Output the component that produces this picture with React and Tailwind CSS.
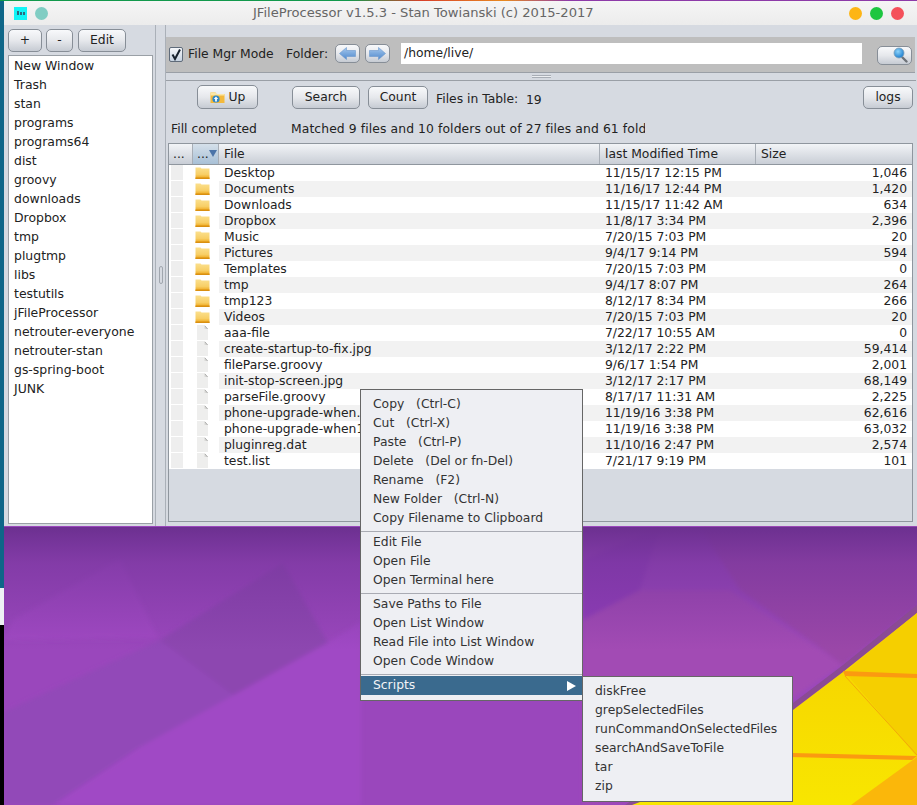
import React from "react";

const places = ["New Window","Trash","stan","programs","programs64","dist","groovy","downloads","Dropbox","tmp","plugtmp","libs","testutils","jFileProcessor","netrouter-everyone","netrouter-stan","gs-spring-boot","JUNK"];
const files = [
  ["d","Desktop","11/15/17 12:15 PM","1,046"],["d","Documents","11/16/17 12:44 PM","1,420"],["d","Downloads","11/15/17 11:42 AM","634"],["d","Dropbox","11/8/17 3:34 PM","2,396"],["d","Music","7/20/15 7:03 PM","20"],["d","Pictures","9/4/17 9:14 PM","594"],["d","Templates","7/20/15 7:03 PM","0"],["d","tmp","9/4/17 8:07 PM","264"],["d","tmp123","8/12/17 8:34 PM","266"],["d","Videos","7/20/15 7:03 PM","20"],
  ["f","aaa-file","7/22/17 10:55 AM","0"],["f","create-startup-to-fix.jpg","3/12/17 2:22 PM","59,414"],["f","fileParse.groovy","9/6/17 1:54 PM","2,001"],["f","init-stop-screen.jpg","3/12/17 2:17 PM","68,149"],["f","parseFile.groovy","8/17/17 11:31 AM","2,225"],["f","phone-upgrade-when.","11/19/16 3:38 PM","62,616"],["f","phone-upgrade-when1","11/19/16 3:38 PM","63,032"],["f","pluginreg.dat","11/10/16 2:47 PM","2,574"],["f","test.list","7/21/17 9:19 PM","101"],
];
const menuGroups = [
  ["Copy\u00a0\u00a0\u00a0(Ctrl-C)","Cut\u00a0\u00a0\u00a0(Ctrl-X)","Paste\u00a0\u00a0\u00a0(Ctrl-P)","Delete\u00a0\u00a0\u00a0(Del or fn-Del)","Rename\u00a0\u00a0\u00a0(F2)","New Folder\u00a0\u00a0\u00a0(Ctrl-N)","Copy Filename to Clipboard"],
  ["Edit File","Open File","Open Terminal here"],
  ["Save Paths to File","Open List Window","Read File into List Window","Open Code Window"],
];
const scripts = ["diskFree","grepSelectedFiles","runCommandOnSelectedFiles","searchAndSaveToFile","tar","zip"];

const btn = "flex items-center justify-center border border-[#878e97] rounded-[5px] bg-linear-to-b from-[#f8f9fb] via-[#e6e8ec] to-[#c6cbd3] text-[12.35px] text-[#222]";

function Wallpaper() {
  return (
    <svg className="absolute inset-0" width="917" height="805" viewBox="0 0 917 805">
      <defs>
        <linearGradient id="shade" x1="0" y1="527" x2="0" y2="650" gradientUnits="userSpaceOnUse">
          <stop offset="0" stopColor="#6c3090" stopOpacity="1" />
          <stop offset="0.3" stopColor="#74349a" stopOpacity="0.6" />
          <stop offset="1" stopColor="#74349a" stopOpacity="0" />
        </linearGradient>
        <linearGradient id="edge" x1="0" y1="0" x2="1" y2="0">
          <stop offset="0" stopColor="#12994c" />
          <stop offset="0.38" stopColor="#12994c" />
          <stop offset="0.46" stopColor="#d8402a" />
          <stop offset="0.55" stopColor="#e88a20" />
          <stop offset="0.62" stopColor="#8d3aa8" />
          <stop offset="1" stopColor="#8d3aa8" />
        </linearGradient>
        <linearGradient id="yl" x1="0" y1="613" x2="0" y2="805" gradientUnits="userSpaceOnUse">
          <stop offset="0" stopColor="#f6d000" />
          <stop offset="1" stopColor="#f8e600" />
        </linearGradient>
        <filter id="soft" x="-5%" y="-5%" width="110%" height="110%">
          <feGaussianBlur stdDeviation="2" />
        </filter>
      </defs>
      <rect width="917" height="805" fill="#9a47bc" />
      <g filter="url(#soft)">
        <polygon points="4,712 160,640 328,643 240,700 140,747 53,805 4,805" fill="#9248b8" />
        <polygon points="160,640 283,563 328,643 240,700" fill="#8d46b0" />
        <polygon points="13,620 120,559 158,638 4,640" fill="#a04ac2" />
        <polygon points="327,643 361,622 361,805 53,805 140,747" fill="#a048c5" />
        <polygon points="583,590 730,590 843,665 640,800 583,805" fill="#a24bb4" />
        <polygon points="583,560 660,527 640,590 583,620" fill="#8f3db8" />
        <polygon points="700,527 917,527 917,606 843,665 740,590" fill="#9a46a8" />
      </g>
      <rect x="0" y="527" width="917" height="125" fill="url(#shade)" />
      <polygon points="917,605 843,665 793,703 640,795 625,805 640,805 793,710 843,672 917,613" fill="#8b4a95" />
      <polygon points="917,613 843,672 793,710 640,802 632,805 917,805" fill="url(#yl)" />
      <polygon points="917,613 845,672 917,757" fill="#f5cf00" />
      <polygon points="917,757 851,805 917,805" fill="#fbb70a" />
      <polygon points="843,671 917,674 917,678 845,676" fill="#fb9a10" />
      <polygon points="793,753 917,756 912,760 790,757" fill="#fb9a10" />
      <line x1="845" y1="676" x2="917" y2="755" stroke="#f2a90a" strokeWidth="1" />
      <rect x="0" y="0" width="4" height="588" fill="#0f6688" />
      <rect x="0" y="588" width="4" height="37" fill="#eef1f4" />
      <rect x="0" y="625" width="4" height="180" fill="#000" />
      <rect x="0" y="0" width="917" height="1" fill="url(#edge)" />
    </svg>
  );
}

const Folder = () => (
  <svg width="15" height="12" viewBox="0 0 15 12">
    <defs>
      <linearGradient id="fg" x1="0" y1="0" x2="0" y2="1">
        <stop offset="0" stopColor="#fbe08e" />
        <stop offset="0.6" stopColor="#f8cf66" />
        <stop offset="1" stopColor="#eda212" />
      </linearGradient>
    </defs>
    <path d="M0.5 0.5h5l1 1h8V12H.5z" fill="url(#fg)" />
    <rect x="0.5" y="10.5" width="14" height="1.5" fill="#d98f10" />
  </svg>
);

const Page = () => (
  <svg width="13" height="15" viewBox="0 0 13 15">
    <path d="M1 0h7.5L12 4v11H1z" fill="#eeeeed" />
    <path d="M8.5 0v4H12z" fill="#d8d8d6" />
    <path d="M9 1l2.6 3" stroke="#9a9a98" strokeWidth="0.7" />
  </svg>
);

const Arrow = ({ flip }) => (
  <svg width="17" height="13" viewBox="0 0 17 13" className={flip ? "-scale-x-100" : ""}>
    <defs>
      <linearGradient id="ag" x1="0" y1="0" x2="0" y2="1">
        <stop offset="0" stopColor="#a6c9ee" />
        <stop offset="1" stopColor="#4f88cc" />
      </linearGradient>
    </defs>
    <path d="M0.5 6.5L7.5 0.5V3.5H16.5V9.5H7.5V12.5Z" fill="url(#ag)" stroke="#6a97cc" strokeWidth="0.6" />
  </svg>
);

const Magnifier = () => (
  <svg width="15" height="16" viewBox="0 0 15 16">
    <defs>
      <radialGradient id="mg" cx="0.4" cy="0.35" r="0.7">
        <stop offset="0" stopColor="#8fd4fa" />
        <stop offset="1" stopColor="#1478cc" />
      </radialGradient>
    </defs>
    <path d="M8.5 9.5L13.5 14.5" stroke="#6d7278" strokeWidth="2.4" strokeLinecap="round" />
    <circle cx="6" cy="6" r="5" fill="url(#mg)" stroke="#7f9fb8" strokeWidth="0.8" />
  </svg>
);

const UpIcon = () => (
  <svg width="15" height="11" viewBox="0 0 15 11">
    <path d="M0.5 0.5h5l1 1.5h8V11H.5z" fill="#f3b93c" />
    <path d="M0.5 0.5h5l1 1.5h8v1.5H.5z" fill="#fbe6a6" />
    <circle cx="6" cy="7" r="3.6" fill="#2d86c8" />
    <path d="M6 4.4L8.2 7H6.9v2.4H5.1V7H3.8z" fill="#fff" />
  </svg>
);

export default function App() {
  return (
    <div className="relative w-[917px] h-[805px] overflow-hidden font-['DejaVu_Sans',sans-serif] text-[12.35px] text-[#222]">
      <Wallpaper />
      <div className="relative ml-[4px] mt-px w-[913px] h-[525px] flex flex-col bg-[#d6dae1]">
        <div className="h-[24px] shrink-0 flex items-center bg-linear-to-b from-[#f5f5f5] to-[#ececec]">
          <div className="ml-[10px] w-[13px] h-[13px] bg-[#12f4f6] flex items-center justify-center gap-px">
            <span className="w-[2px] h-[4px] bg-[#2d6a80]" />
            <span className="w-[2px] h-[3px] bg-[#2d6a80]" />
            <span className="w-[2px] h-[3px] bg-[#2d6a80]" />
          </div>
          <span className="ml-[8px] w-[13px] h-[13px] rounded-full bg-[#80cdc3]" />
          <span className="ml-[205px] w-[345px] text-[13.1px] text-[#666] whitespace-nowrap">JFileProcessor v1.5.3 - Stan Towianski (c) 2015-2017</span>
          <span className="ml-[251px] w-[13px] h-[13px] rounded-full bg-[#fdb515]" />
          <span className="ml-[8px] w-[13px] h-[13px] rounded-full bg-[#1dc640]" />
          <span className="ml-[8px] w-[13px] h-[13px] rounded-full bg-[#f4505a]" />
        </div>
        <div className="flex flex-1 min-h-0">
          <div className="w-[150px] shrink-0 pl-[4px] pt-[4px] flex flex-col">
            <div className="flex h-[23px] shrink-0">
              <button className={btn + " w-[34px]"}>+</button>
              <button className={btn + " w-[27px] ml-[4px]"}>-</button>
              <button className={btn + " w-[48px] ml-[5px]"}>Edit</button>
            </div>
            <div className="mt-[3px] w-[145px] h-[469px] shrink-0 bg-white border border-[#9aa0a6] pl-[5px] text-[12.45px]">
              {places.map((p) => (
                <div key={p} className="h-[19px] leading-[19px] whitespace-nowrap">{p}</div>
              ))}
            </div>
          </div>
          <div className="w-[13px] shrink-0 flex pl-px">
            <div className="w-[11px] h-full border-x border-[#aab0b8] flex items-start justify-center">
              <div className="mt-[241px] w-[4px] h-[18px] border border-[#a0a6ae] rounded-[2px]" />
            </div>
          </div>
          <div className="flex-1 min-w-0 flex flex-col">
            <div className="mt-[12px] ml-[-1px] mr-[2px] h-[36px] shrink-0 bg-[#bebebe] border-b border-[#9a9fa6] flex items-center">
              <div className="ml-[3px] w-[14px] h-[15px] border border-[#5f6b7a] rounded-[2px] bg-linear-to-b from-[#f5f7fa] to-[#c6d2e0] flex items-center justify-center">
                <svg width="12" height="13" viewBox="0 0 12 13"><path d="M2.5 6.5L5 11 10 1.5" fill="none" stroke="#15202c" strokeWidth="2" /></svg>
              </div>
              <span className="ml-[5px] w-[98px] whitespace-nowrap">File Mgr Mode</span>
              <span className="whitespace-nowrap w-[49px]">Folder:</span>
              <button className={btn + " w-[25px] h-[19px] -mt-[3px]"}><Arrow /></button>
              <button className={btn + " w-[25px] h-[19px] ml-[5px] -mt-[3px]"}><Arrow flip /></button>
              <div className="ml-[11px] w-[461px] h-[21px] -mt-[3px] bg-white pl-[3px] leading-[21px]">/home/live/</div>
              <button className={btn + " ml-[15px] w-[35px] h-[19px] mt-[1px] !justify-end pr-[3px]"}><Magnifier /></button>
            </div>
            <div className="h-[8px] shrink-0 ml-[-1px] mr-[1px] border-b border-[#9a9fa6] flex justify-center items-center">
              <div className="w-[19px] h-[3px] border-y border-[#a8adb5] bg-[#eceef1]" />
            </div>
            <div className="ml-[2px] mr-[4px] flex h-[24px] shrink-0 mt-[4px] items-stretch">
              <button className={btn + " ml-[28px] w-[61px] gap-[4px]"}><UpIcon />Up</button>
              <button className={btn + " ml-[34px] w-[68px] h-[23px] mt-px"}>Search</button>
              <button className={btn + " ml-[8px] w-[60px] h-[23px] mt-px"}>Count</button>
              <span className="ml-[8px] w-[90px] leading-[28px] whitespace-nowrap">Files in Table:</span>
              <span className="leading-[30px]">19</span>
              <button className={btn + " ml-auto w-[50px] h-[23px] mt-px"}>logs</button>
            </div>
            <div className="ml-[2px] flex h-[20px] mt-[10px] shrink-0 items-center pt-px">
              <span className="ml-[2px] w-[120px] shrink-0 whitespace-nowrap">Fill completed</span>
              <span className="whitespace-nowrap overflow-hidden w-[354px] shrink-0 tracking-[0.1px]">Matched 9 files and 10 folders out of 27 files and 61 folders</span>
            </div>
            <div className="ml-[1px] mr-[4px] mt-[4px] mb-[4px] flex-1 min-h-0 border border-[#8f969e]">
              <div className="h-[21px] flex border-b border-[#8f969e] bg-linear-to-b from-[#f2f4f7] to-[#c9ced6] leading-[20px]">
                <div className="w-[24px] border-r border-[#a8aeb6] pl-[4px]">...</div>
                <div className="w-[26px] border-r border-[#a8aeb6] pl-[4px] bg-linear-to-b from-[#d5e0ea] to-[#a8c0d6] flex">
                  ...
                  <svg width="8" height="7" viewBox="0 0 8 7" className="mt-[6px]"><path d="M0 0h8L4 7z" fill="#4c74a8" /></svg>
                </div>
                <div className="w-[381px] border-r border-[#a8aeb6] pl-[5px]">File</div>
                <div className="w-[156px] border-r border-[#a8aeb6] pl-[5px]">last Modified Time</div>
                <div className="flex-1 pl-[5px]">Size</div>
              </div>
              {files.map(([k, n, t, s], i) => (
                <div key={i} className="flex h-[16px] leading-[16px] bg-white">
                  <div className="w-[24px] shrink-0 pl-[2px]"><div className="w-[12px] h-[16px] bg-[#eeeeee] border-b border-white" /></div>
                  <div className={"w-[26px] shrink-0 flex items-start overflow-hidden " + (k === "d" ? "pl-[2px] pt-[2px]" : "pl-[3px]")}>{k === "d" ? <Folder /> : <Page />}</div>
                  <div className={"flex flex-1 " + (i % 2 ? "bg-[#f2f2f2]" : "bg-white")}>
                    <div className="w-[381px] pl-[5px] whitespace-nowrap overflow-hidden">{n}</div>
                    <div className="w-[156px] pl-[5px] whitespace-nowrap">{t}</div>
                    <div className="flex-1 pr-[5px] text-right">{s}</div>
                  </div>
                </div>
              ))}
            </div>
          </div>
        </div>
      </div>

      <div className="absolute left-[360px] top-[389px] w-[223px] h-[312px] bg-[#eeeff3] border border-[#666] pt-[5px] text-[#333] flex flex-col">
        {menuGroups.map((g, gi) => (
          <div key={gi} className="border-b border-[#a9abb3] pb-[3px] mb-[1px]">
            {g.map((m) => (
              <div key={m} className="h-[19px] leading-[19px] pl-[12px] whitespace-nowrap">{m}</div>
            ))}
          </div>
        ))}
        <div className="h-[19px] leading-[19px] pl-[12px] bg-[#3a6a8e] text-[#f2f4f7] flex items-center justify-between pr-[6px]">
          Scripts
          <svg width="9" height="10" viewBox="0 0 9 10"><path d="M0 0l9 5-9 5z" fill="#fff" /></svg>
        </div>
      </div>

      <div className="absolute left-[582px] top-[676px] w-[211px] h-[126px] bg-[#eeeff3] border border-[#666] pt-[5px] pl-[12px] text-[#333]">
        {scripts.map((m) => (
          <div key={m} className="h-[19px] leading-[19px] whitespace-nowrap">{m}</div>
        ))}
      </div>
    </div>
  );
}
